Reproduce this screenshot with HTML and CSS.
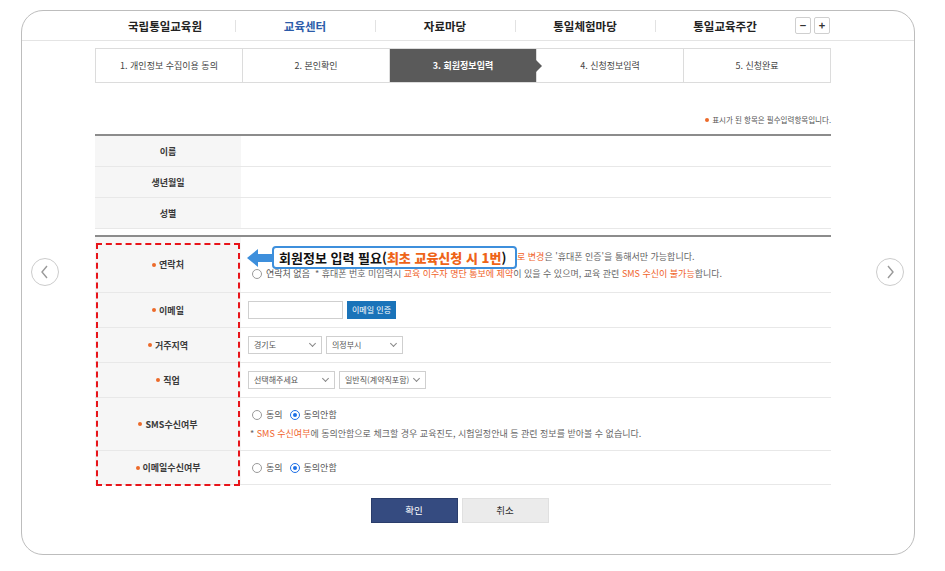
FILE: index.html
```html
<!DOCTYPE html>
<html lang="ko">
<head>
    <meta charset="UTF-8">
    <title>회원정보입력 | 국립통일교육원 교육센터</title>
    <link rel="stylesheet" href="styles.css">
</head>
<body>
    <div class="frame">
        <span class="side side-prev">
            <svg width="10" height="14" viewBox="0 0 10 14"><path d="M7 1 L2 7 L7 13" fill="none" stroke="#999" stroke-width="1.4"/></svg>
        </span>
        <span class="side side-next">
            <svg width="10" height="14" viewBox="0 0 10 14"><path d="M3 1 L8 7 L3 13" fill="none" stroke="#999" stroke-width="1.4"/></svg>
        </span>

        <div class="gnb">
            <ul class="gnb-menu">
                <li>국립통일교육원</li>
                <li class="on">교육센터</li>
                <li>자료마당</li>
                <li>통일체험마당</li>
                <li>통일교육주간</li>
            </ul>
            <div class="zoom-btns">
                <span>−</span>
                <span>+</span>
            </div>
        </div>

        <div class="content">
            <ol class="steps">
                <li>1. 개인정보 수집이용 동의</li>
                <li>2. 본인확인</li>
                <li class="on">3. 회원정보입력</li>
                <li>4. 신청정보입력</li>
                <li>5. 신청완료</li>
            </ol>

            <p class="req-note"><span class="dot"></span>표시가 된 항목은 필수입력항목입니다.</p>

            <div class="form-table">
                <div class="row h31"><div class="th">이름</div><div class="td"></div></div>
                <div class="row h31"><div class="th">생년월일</div><div class="td"></div></div>
                <div class="row h31"><div class="th">성별</div><div class="td"></div></div>
            </div>

            <div class="form-table second">
                <div class="row h56">
                    <div class="th"><span class="dot"></span>연락처</div>
                    <div class="td contact">
                        <div class="line">
                            <span class="note first-note"><em>로 변경</em>은 '휴대폰 인증'을 통해서만 가능합니다.</span>
                        </div>
                        <div class="line">
                            <span class="radio"></span><span class="lbl">연락처 없음</span>
                            <span class="note">* 휴대폰 번호 미입력시 <em>교육 이수자 명단 통보에 제약</em>이 있을 수 있으며, 교육 관련 <em>SMS 수신이 불가능</em>합니다.</span>
                        </div>
                    </div>
                </div>
                <div class="row h35">
                    <div class="th"><span class="dot"></span>이메일</div>
                    <div class="td">
                        <span class="input"></span>
                        <span class="btn-blue">이메일 인증</span>
                    </div>
                </div>
                <div class="row h35">
                    <div class="th"><span class="dot"></span>거주지역</div>
                    <div class="td">
                        <span class="select w74">경기도<i class="chev"></i></span>
                        <span class="select w76">의정부시<i class="chev"></i></span>
                    </div>
                </div>
                <div class="row h35">
                    <div class="th"><span class="dot"></span>직업</div>
                    <div class="td">
                        <span class="select w87">선택해주세요<i class="chev"></i></span>
                        <span class="select w86">일반직(계약직포함)<i class="chev"></i></span>
                    </div>
                </div>
                <div class="row h53">
                    <div class="th"><span class="dot"></span>SMS수신여부</div>
                    <div class="td stack">
                        <div class="line">
                            <span class="radio"></span><span class="lbl">동의</span>
                            <span class="radio checked"></span><span class="lbl">동의안함</span>
                        </div>
                        <div class="line">
                            <span class="note">* <em>SMS 수신여부</em>에 동의안함으로 체크할 경우 교육진도, 시험일정안내 등 관련 정보를 받아볼 수 없습니다.</span>
                        </div>
                    </div>
                </div>
                <div class="row h34">
                    <div class="th"><span class="dot"></span>이메일수신여부</div>
                    <div class="td">
                        <span class="radio"></span><span class="lbl">동의</span>
                        <span class="radio checked"></span><span class="lbl">동의안함</span>
                    </div>
                </div>

                <!-- annotation overlay -->
                <div class="mark"></div>
                <div class="callout">
                    <svg class="callout-arrow" width="26" height="18" viewBox="0 0 26 18"><path d="M0 9 L11 0 L11 5 L26 5 L26 13 L11 13 L11 18 Z" fill="#3d8fdc"/></svg>
                    <div class="callout-box">회원정보 입력 필요(<b>최초 교육신청 시 1번</b>)</div>
                </div>
            </div>

            <div class="btn-area">
                <span class="btn btn-ok">확인</span>
                <span class="btn btn-cancel">취소</span>
            </div>
        </div>
    </div>
</body>
</html>
```

FILE: styles.css
```css
* {
    box-sizing: border-box;
}
body {
    margin: 0;
    background: #fff;
    font-family: "Noto Sans CJK KR", "Noto Sans", sans-serif;
    color: #333;
}
.frame {
    position: relative;
    margin: 10px 0 0 21px;
    width: 894px;
    height: 545px;
    border: 1px solid #bdbdbd;
    border-radius: 22px;
}
.side {
    position: absolute;
    top: 247px;
    width: 28px;
    height: 28px;
    border: 1px solid #ccc;
    border-radius: 50%;
    display: flex;
    align-items: center;
    justify-content: center;
    background: #fff;
}
.side-prev { left: 9px; }
.side-next { right: 10px; }

/* top menu */
.gnb {
    height: 30px;
    border-bottom: 1px solid #e4e4e4;
    display: flex;
    align-items: center;
    padding-left: 73px;
}
.gnb-menu {
    display: flex;
    margin: 0;
    padding: 0;
    list-style: none;
}
.gnb-menu li {
    width: 140px;
    text-align: center;
    font-size: 11.5px;
    font-weight: bold;
    color: #222;
    line-height: 14px;
    position: relative;
}
.gnb-menu li + li::before {
    content: "";
    position: absolute;
    left: 0;
    top: 1px;
    height: 12px;
    border-left: 1px solid #e2e2e2;
}
.gnb-menu li.on {
    color: #2b5ba9;
}
.zoom-btns {
    display: flex;
    gap: 3px;
}
.zoom-btns span {
    width: 16px;
    height: 17px;
    border: 1px solid #cfcfcf;
    border-radius: 2px;
    font-size: 11px;
    font-weight: bold;
    line-height: 15px;
    text-align: center;
    color: #333;
}

.content {
    margin-left: 73px;
    width: 736px;
}

/* steps */
.steps {
    display: flex;
    margin: 7px 0 0;
    padding: 0;
    list-style: none;
    height: 35px;
    border: 1px solid #dcdcdc;
}
.steps li {
    flex: 1;
    text-align: center;
    font-size: 9px;
    line-height: 33px;
    color: #444;
    position: relative;
}
.steps li + li {
    border-left: 1px solid #dcdcdc;
}
.steps li.on {
    background: #5a5a5a;
    color: #fff;
    font-weight: bold;
}
.steps li.on::after {
    content: "";
    position: absolute;
    right: -6px;
    top: 11px;
    border-left: 6px solid #5a5a5a;
    border-top: 6px solid transparent;
    border-bottom: 6px solid transparent;
    z-index: 1;
}

.req-note {
    margin: 31px 0 0;
    text-align: right;
    font-size: 7.5px;
    line-height: 12px;
    color: #555;
}
.dot {
    display: inline-block;
    width: 4px;
    height: 4px;
    border-radius: 50%;
    background: #ec6a2a;
    margin-right: 3px;
    vertical-align: 1px;
}

/* form table */
.form-table {
    margin-top: 8px;
    border-top: 2px solid #8c8c8c;
}
.form-table.second {
    margin-top: 6px;
    position: relative;
}
.row {
    display: grid;
    grid-template-columns: 146px 1fr;
    border-bottom: 1px solid #e8e8e8;
}
.h31 { height: 31px; }
.h34 { height: 34px; }
.h35 { height: 35px; }
.h53 { height: 53px; }
.h56 { height: 56px; }
.th {
    background: #f6f6f6;
    display: flex;
    align-items: center;
    justify-content: center;
    font-size: 9px;
    color: #3a3a3a;
    font-weight: bold;
}
.td {
    display: flex;
    align-items: center;
    padding-left: 7px;
    font-size: 9px;
    color: #555;
}
.td.contact {
    flex-direction: column;
    align-items: flex-start;
    justify-content: center;
    gap: 2px;
    padding-top: 1px;
}
.td.stack {
    flex-direction: column;
    align-items: flex-start;
    justify-content: center;
    gap: 4px;
}
.line {
    display: flex;
    align-items: center;
    height: 15px;
}
.radio {
    display: inline-block;
    width: 10px;
    height: 10px;
    border: 1px solid #9a9a9a;
    border-radius: 50%;
    margin: 0 4px 0 4px;
    position: relative;
}
.radio.checked {
    border-color: #1d6fe6;
}
.radio.checked::after {
    content: "";
    position: absolute;
    left: 2px;
    top: 2px;
    width: 4px;
    height: 4px;
    border-radius: 50%;
    background: #1d6fe6;
}
.lbl {
    margin-right: 3px;
    color: #555;
}
.note {
    color: #666;
    margin-left: 2px;
}
.first-note {
    margin-left: 269px;
}
.note em {
    font-style: normal;
    color: #f0632a;
}
.input {
    width: 95px;
    height: 18px;
    border: 1px solid #cfcfcf;
}
.btn-blue {
    margin-left: 4px;
    height: 18px;
    padding: 0 5px;
    background: #1a73b9;
    color: #fff;
    font-size: 8px;
    line-height: 18px;
}
.select {
    position: relative;
    height: 18px;
    border: 1px solid #cfcfcf;
    font-size: 8px;
    line-height: 16px;
    padding-left: 5px;
    color: #555;
    margin-right: 4px;
}
.w74 { width: 74px; }
.w76 { width: 77px; }
.w87 { width: 87px; }
.w86 { width: 87px; }
.chev {
    position: absolute;
    right: 6px;
    top: 4px;
    width: 5px;
    height: 5px;
    border-right: 1px solid #888;
    border-bottom: 1px solid #888;
    transform: rotate(45deg);
}

/* annotation */
.mark {
    position: absolute;
    left: 1px;
    top: 6px;
    width: 144px;
    height: 243px;
    border: 2px dashed #e8141a;
}
.callout {
    position: absolute;
    left: 152px;
    top: 9px;
    display: flex;
    align-items: center;
}
.callout-arrow {
    display: block;
}
.callout-box {
    width: 245px;
    height: 23px;
    margin-left: -1px;
    border: 2px solid #3d8fdc;
    border-radius: 4px;
    background: #fff;
    font-size: 13px;
    font-weight: bold;
    line-height: 19px;
    color: #111;
    padding-left: 5px;
    white-space: nowrap;
}
.callout-box b {
    color: #ee6418;
}

/* buttons */
.btn-area {
    display: flex;
    justify-content: center;
    gap: 4px;
    margin-top: 13px;
    padding-right: 7px;
}
.btn {
    width: 87px;
    height: 25px;
    font-size: 9.5px;
    text-align: center;
}
.btn-ok {
    background: #354b80;
    color: #fff;
    border: 1px solid #2a3d6b;
    line-height: 23px;
}
.btn-cancel {
    background: #ebebeb;
    color: #333;
    border: 1px solid #e0e0e0;
    line-height: 23px;
}
```
